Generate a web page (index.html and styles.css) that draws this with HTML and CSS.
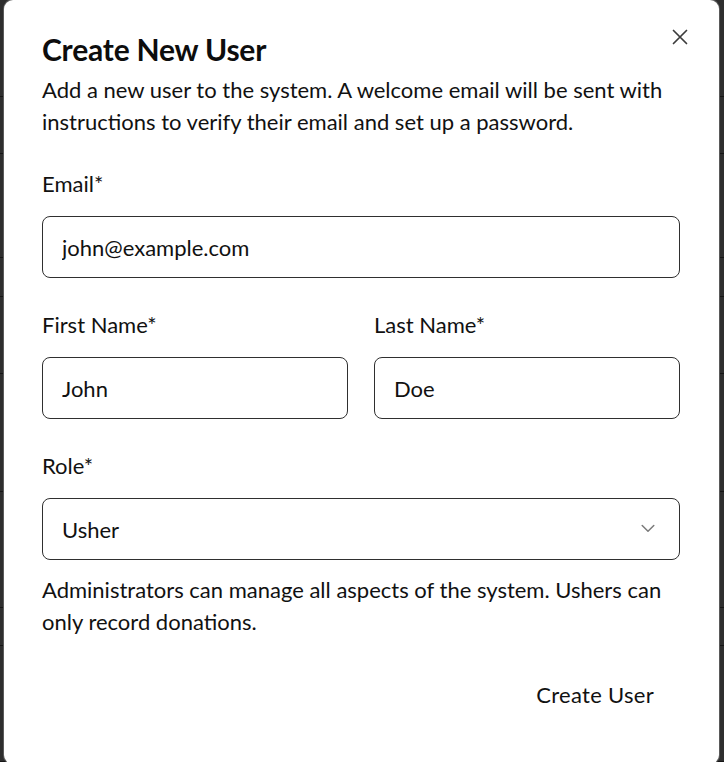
FILE: index.html
```html
<!DOCTYPE html>
<html lang="en">
<head>
<meta charset="utf-8">
<title>Create New User</title>
<link rel="stylesheet" href="styles.css">
</head>
<body>
<div class="page">
  <div class="row r1"></div>
  <div class="row r2"></div>
  <div class="row r3"></div>
  <div class="row r4"></div>
  <div class="row r5"></div>
  <div class="row r6"></div>
  <div class="row r7"></div>
  <div class="row r8"></div>
  <div class="row r9"></div>
</div>
<div class="dialog" role="dialog" aria-labelledby="dlg-title">
  <button class="close" type="button" aria-label="Close">
    <svg width="16" height="16" viewBox="0 0 16 16" fill="none" stroke="#3c3c3c" stroke-width="1.7" stroke-linecap="round"><path d="M1.5 1.5 L14.5 14.5 M14.5 1.5 L1.5 14.5"/></svg>
  </button>
  <h2 class="title" id="dlg-title">Create New User</h2>
  <p class="desc">Add a new user to the system. A welcome email will be sent with instructions to verify their email and set up a password.</p>

  <div class="field">
    <label class="label" for="email">Email*</label>
    <input class="input" id="email" type="email" value="john@example.com">
  </div>

  <div class="field two">
    <div class="col">
      <label class="label" for="first">First Name*</label>
      <input class="input" id="first" type="text" value="John">
    </div>
    <div class="col">
      <label class="label" for="last">Last Name*</label>
      <input class="input" id="last" type="text" value="Doe">
    </div>
  </div>

  <div class="field last-field">
    <label class="label" for="role">Role*</label>
    <div class="select-wrap">
      <select class="input select" id="role">
        <option>Usher</option>
        <option>Administrator</option>
      </select>
      <svg class="chev" width="14" height="9" viewBox="0 0 14 9" fill="none" stroke="#7a7a7a" stroke-width="1.5" stroke-linecap="round" stroke-linejoin="round"><path d="M1.2 1.5 L7 7.2 L12.8 1.5"/></svg>
    </div>
  </div>

  <p class="help">Administrators can manage all aspects of the system. Ushers can only record donations.</p>

  <div class="actions">
    <button class="btn" type="button">Create User</button>
  </div>
</div>
</body>
</html>
```

FILE: styles.css
```css
* { box-sizing: border-box; }

html, body {
  margin: 0;
  padding: 0;
  height: 762px;
  overflow: hidden;
}

body {
  background: #2e2e2e;
  font-family: Lato, "Noto Sans", "Liberation Sans", sans-serif;
  color: #111;
}

.page {
  display: flex;
  flex-direction: column;
}

.row {
  border-bottom: 1px solid #151515;
  background: #2e2e2e;
}
.r1 { height: 97px; }
.r2 { height: 57px; }
.r3 { height: 104px; }
.r4 { height: 39px; }
.r5 { height: 77px; }
.r6 { height: 118px; }
.r7 { height: 116px; }
.r8 { height: 38px; }
.r9 { height: 116px; }

.dialog {
  position: absolute;
  top: 0;
  left: 4px;
  width: 715px;
  height: 764px;
  background: #fff;
  border-radius: 9px;
  padding: 32px 39px 0 38px;
  box-shadow: 0 0 0 1px #5a5a5a;
}

.close {
  position: absolute;
  top: 29px;
  right: 31px;
  width: 16px;
  height: 16px;
  padding: 0;
  border: 0;
  background: transparent;
  display: flex;
}

.title {
  margin: 0;
  font-size: 30px;
  line-height: 34px;
  font-weight: 700;
  color: #0d0d0d;
  letter-spacing: -0.2px;
}

.desc {
  margin: 8px 0 0;
  font-size: 22px;
  line-height: 32px;
}

.field {
  margin-top: 34px;
  display: flex;
  flex-direction: column;
}
.field + .field { margin-top: 35px; }

.field.two {
  display: grid;
  grid-template-columns: 1fr 1fr;
  column-gap: 26px;
}

.col {
  display: flex;
  flex-direction: column;
}

.label {
  font-size: 22px;
  line-height: 24px;
  margin-bottom: 20px;
}

.input {
  height: 62px;
  width: 100%;
  border: 1px solid #2f2f2f;
  border-radius: 8px;
  padding: 0 19px;
  font-family: inherit;
  font-size: 22px;
  color: #111;
  background: #fff;
  outline: none;
}

.select-wrap {
  position: relative;
}

.select {
  appearance: none;
  -webkit-appearance: none;
}

.chev {
  position: absolute;
  right: 25px;
  top: 26px;
  pointer-events: none;
}

.help {
  margin: 14px 0 0;
  font-size: 22px;
  line-height: 32px;
}

.actions {
  display: flex;
  justify-content: flex-end;
  margin-top: 33px;
}

.btn {
  font-family: inherit;
  font-size: 22px;
  line-height: 24px;
  padding: 12px 26px;
  border: 0;
  background: transparent;
  color: #111;
  border-radius: 8px;
  letter-spacing: 0.3px;
}
```
